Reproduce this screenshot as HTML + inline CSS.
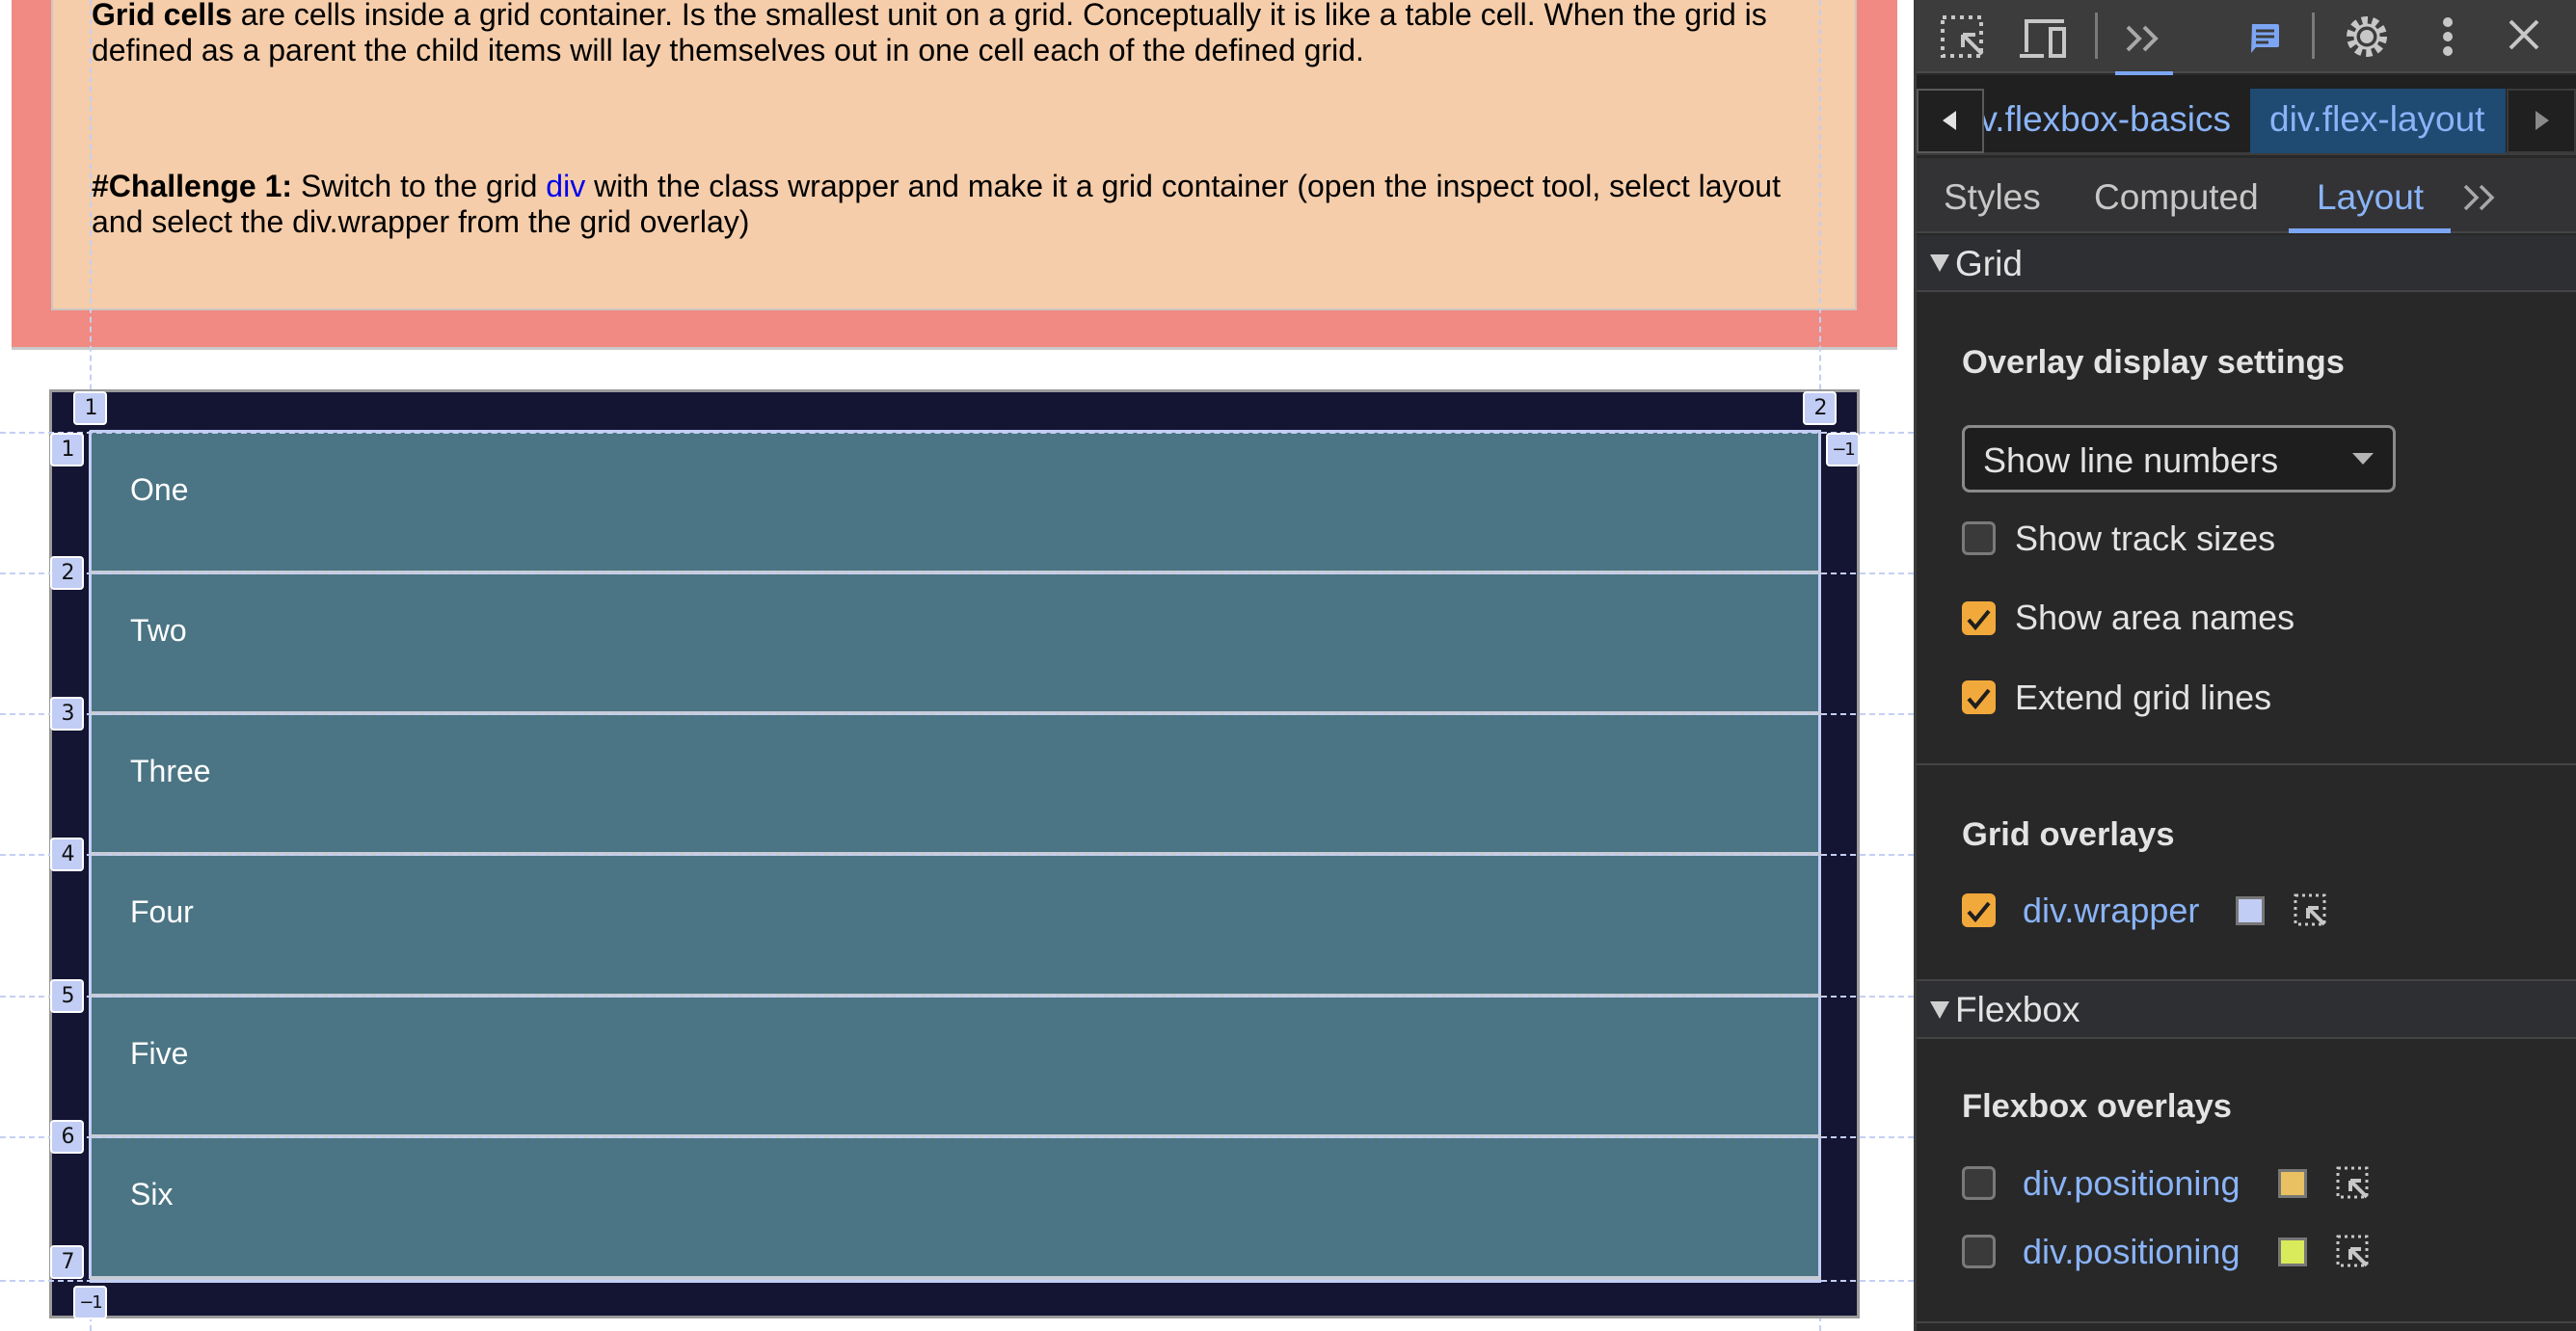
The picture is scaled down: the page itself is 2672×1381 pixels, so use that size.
<!DOCTYPE html>
<html><head><meta charset="utf-8"><style>
*{margin:0;padding:0;box-sizing:border-box}
body{width:2672px;height:1381px;position:relative;overflow:hidden;background:#fff;font-family:"Liberation Sans",Arial,sans-serif}
.a{position:absolute}
.p{font-size:32px;line-height:37px;color:#000;left:95px;width:1860px;white-space:nowrap}
.cell{position:absolute;left:93px;width:1795px;background:#4b7584;color:#fff;font-size:32px}
.cell span{position:absolute;left:42px;top:42px}
.hl{position:absolute;left:93px;width:1796px;height:4px;background:#c8ccd6}
.hd{position:absolute;left:0;width:1985px;height:0;border-top:2px dashed #c4cff3}
.lab{position:absolute;width:35px;height:35px;background:#c2cdf5;border:2px solid #fff;border-radius:4px;color:#111;font-size:22px;text-align:center;line-height:31px;font-family:"DejaVu Sans",sans-serif;letter-spacing:-2px}
.lab.s{font-size:18px}
.dv{color:#e3e3e3;font-size:36px}
.cb{position:absolute;width:35px;height:35px;border-radius:6px}
.cb.off{border:3px solid #7a7a7a;background:#3a3a3a}
.cb.on{background:#f2a93b}
.lnk{color:#8ab4f8;font-size:36px}
.sw{position:absolute;width:30px;height:30px;border:3px solid #777}
.tab{color:#c7c7c7;font-size:37px;top:184px}
.h{font-weight:bold;font-size:34.5px}
</style></head><body>
<div class="a" style="left:12px;top:0;width:1956px;height:363px;background:#f08a82;border-bottom:3px solid #c9c9c9"></div>
<div class="a" style="left:53px;top:0;width:1873px;height:322px;background:#f5cdaa;border:2px solid #cdc6c0;border-top:none"></div>
<div class="a p" style="top:-3px"><b>Grid cells</b> are cells inside a grid container. Is the smallest unit on a grid. Conceptually it is like a table cell. When the grid is<br>defined as a parent the child items will lay themselves out in one cell each of the defined grid.</div>
<div class="a p" style="top:175px"><b>#Challenge 1:</b> Switch to the grid <span style="color:#0000ee">div</span> with the class wrapper and make it a grid container (open the inspect tool, select layout<br>and select the div.wrapper from the grid overlay)</div>
<div class="a" style="left:93px;top:0;height:1381px;border-left:2px dashed #c4cff3"></div>
<div class="a" style="left:1887px;top:0;height:1381px;border-left:2px dashed #c4cff3"></div>
<div class="a" style="left:51px;top:404px;width:1878px;height:964px;background:#141433;border:3px solid #9a9a9a"></div>
<div class="cell" style="top:448px;height:146px"><span>One</span></div>
<div class="cell" style="top:594px;height:146px"><span>Two</span></div>
<div class="cell" style="top:740px;height:146px"><span>Three</span></div>
<div class="cell" style="top:886px;height:147px"><span>Four</span></div>
<div class="cell" style="top:1033px;height:146px"><span>Five</span></div>
<div class="cell" style="top:1179px;height:147px"><span>Six</span></div>
<div class="a" style="left:92px;top:447px;width:3px;height:880px;background:#c2cdf5"></div>
<div class="a" style="left:1886px;top:447px;width:3px;height:880px;background:#c2cdf5"></div>
<div class="hl" style="top:446px;background:#c2cdf5;height:3px"></div>
<div class="hl" style="top:592px"></div><div class="hl" style="top:738px"></div><div class="hl" style="top:884px"></div><div class="hl" style="top:1031px"></div><div class="hl" style="top:1177px"></div><div class="hl" style="top:1324px"></div>
<div class="a" style="left:93px;top:1328px;width:1796px;height:3px;background:#c2cdf5"></div>
<div class="hd" style="top:448px"></div><div class="hd" style="top:594px"></div><div class="hd" style="top:740px"></div><div class="hd" style="top:886px"></div><div class="hd" style="top:1033px"></div><div class="hd" style="top:1179px"></div><div class="hd" style="top:1328px"></div>
<div class="lab" style="left:76px;top:406px">1</div>
<div class="lab" style="left:1870px;top:406px">2</div>
<div class="lab" style="left:52px;top:449px">1</div>
<div class="lab s" style="left:1894px;top:449px">−1</div>
<div class="lab" style="left:52px;top:577px">2</div>
<div class="lab" style="left:52px;top:723px">3</div>
<div class="lab" style="left:52px;top:869px">4</div>
<div class="lab" style="left:52px;top:1016px">5</div>
<div class="lab" style="left:52px;top:1162px">6</div>
<div class="lab" style="left:52px;top:1292px">7</div>
<div class="lab s" style="left:76px;top:1334px">−1</div>

<div class="a" style="left:1985px;top:0;width:687px;height:1381px;background:#282828;border-left:3px solid #3c3c3c"></div>
<div class="a" style="left:1988px;top:0;width:684px;height:76px;background:#3c3c3c;border-bottom:2px solid #4a4a4a"></div>
<svg class="a" style="left:1988px;top:0" width="684" height="80" viewBox="1988 0 684 80">
<g fill="none" stroke="#c7c7c7" stroke-width="4">
<rect x="2015" y="18" width="40" height="40" stroke-dasharray="4 5"/>
<path d="M2036 36 L2056 56 M2036 36 h13 M2036 36 v13"/>
<path d="M2102 54 V22 H2141 M2095 58 H2120"/>
<rect x="2127" y="30" width="14" height="28"/>
<path d="M2207 28 l12 12 l-12 12 M2224 28 l12 12 l-12 12" stroke="#a8a8a8"/>
<path d="M2604 22 l28 28 M2632 22 l-28 28"/>
</g>
<rect x="2173" y="13" width="3" height="48" fill="#7a7a7a"/>
<rect x="2398" y="13" width="3" height="48" fill="#7a7a7a"/>
<path d="M2336 25 h26 a2 2 0 0 1 2 2 v20 a2 2 0 0 1 -2 2 h-22 l-5 6 z" fill="#7ca6f5"/>
<path d="M2340 32 h19 M2340 38 h19 M2340 44 h13" stroke="#3c3c3c" stroke-width="3"/>
<circle cx="2455" cy="38" r="17" fill="none" stroke="#c7c7c7" stroke-width="8" stroke-dasharray="6 4.7"/>
<circle cx="2455" cy="38" r="12" fill="none" stroke="#c7c7c7" stroke-width="3"/>
<circle cx="2455" cy="38" r="7" fill="#c7c7c7"/>
<circle cx="2539" cy="23" r="5" fill="#c7c7c7"/><circle cx="2539" cy="38" r="5" fill="#c7c7c7"/><circle cx="2539" cy="53" r="5" fill="#c7c7c7"/>
<rect x="2194" y="74" width="60" height="5" fill="#7ca6f5"/>
</svg>
<div class="a" style="left:1988px;top:78px;width:684px;height:12px;background:#202020"></div>
<div class="a" style="left:1988px;top:90px;width:684px;height:71px;background:#202020;border-bottom:3px solid #3c3c3c"></div>
<div class="a" style="left:2058px;top:92px;width:256px;height:67px;overflow:hidden"><div style="position:absolute;right:0;top:11px;color:#8ab4f8;font-size:37px;white-space:nowrap">div.flexbox-basics</div></div>
<div class="a" style="left:1988px;top:92px;width:70px;height:67px;border:2px solid #5a5a5a;background:#202020"></div>
<div class="a" style="left:2015px;top:115px;width:0;height:0;border-top:10px solid transparent;border-bottom:10px solid transparent;border-right:14px solid #e3e3e3"></div>
<div class="a" style="left:2334px;top:92px;width:265px;height:67px;background:#1f4a71;color:#8ab4f8;font-size:37px;padding:11px 0 0 20px;white-space:nowrap;overflow:hidden">div.flex-layout</div>
<div class="a" style="left:2600px;top:92px;width:72px;height:67px;border:2px solid #3a3a3a;background:#202020"></div>
<div class="a" style="left:2630px;top:115px;width:0;height:0;border-top:10px solid transparent;border-bottom:10px solid transparent;border-left:14px solid #8a8a8a"></div>
<div class="a" style="left:1988px;top:164px;width:684px;height:78px;background:#333335;border-bottom:2px solid #444"></div>
<div class="a tab" style="left:2016px">Styles</div>
<div class="a tab" style="left:2172px">Computed</div>
<div class="a tab" style="left:2403px;color:#8ab4f8">Layout</div>
<svg class="a" style="left:2555px;top:190px" width="40" height="30"><path d="M2 3 l12 12 l-12 12 M18 3 l12 12 l-12 12" stroke="#a8a8a8" stroke-width="3.5" fill="none"/></svg>
<div class="a" style="left:2374px;top:237px;width:168px;height:5px;background:#7ca6f5"></div>
<div class="a" style="left:1988px;top:244px;width:684px;height:59px;background:#2e2f33;border-bottom:2px solid #444"></div>
<div class="a" style="left:2002px;top:264px;width:0;height:0;border-left:10px solid transparent;border-right:10px solid transparent;border-top:18px solid #cfcfcf"></div>
<div class="a dv" style="left:2028px;top:253px;font-size:37px">Grid</div>
<div class="a dv h" style="left:2035px;top:357px">Overlay display settings</div>
<div class="a" style="left:2035px;top:441px;width:450px;height:70px;border:3px solid #8a8a8a;border-radius:8px;background:#1e1e1e"></div>
<div class="a dv" style="left:2057px;top:457px">Show line numbers</div>
<div class="a" style="left:2440px;top:470px;width:0;height:0;border-left:11px solid transparent;border-right:11px solid transparent;border-top:12px solid #b5b5b5"></div>
<div class="cb off" style="left:2035px;top:541px"></div><div class="a dv" style="left:2090px;top:538px">Show track sizes</div>
<div class="cb on" style="left:2035px;top:624px"></div><div class="a dv" style="left:2090px;top:620px">Show area names</div>
<div class="cb on" style="left:2035px;top:706px"></div><div class="a dv" style="left:2090px;top:703px">Extend grid lines</div>
<div class="a" style="left:1988px;top:792px;width:684px;height:2px;background:#444"></div>
<div class="a dv h" style="left:2035px;top:847px">Grid overlays</div>
<div class="cb on" style="left:2035px;top:927px"></div><div class="a lnk" style="left:2098px;top:924px">div.wrapper</div>
<div class="sw" style="left:2319px;top:930px;background:#c2cdf5"></div>
<svg class="a" style="left:2378px;top:926px" width="40" height="40"><rect x="3" y="3" width="30" height="30" fill="none" stroke="#c7c7c7" stroke-width="3" stroke-dasharray="3 4"/><path d="M16 16 l17 17 M16 16 h11 M16 16 v11" stroke="#c7c7c7" stroke-width="4" fill="none"/></svg>
<div class="a" style="left:1988px;top:1016px;width:684px;height:62px;background:#2e2f33;border-top:2px solid #444;border-bottom:2px solid #444"></div>
<div class="a" style="left:2002px;top:1039px;width:0;height:0;border-left:10px solid transparent;border-right:10px solid transparent;border-top:18px solid #cfcfcf"></div>
<div class="a dv" style="left:2028px;top:1027px;font-size:37px">Flexbox</div>
<div class="a dv h" style="left:2035px;top:1129px">Flexbox overlays</div>
<div class="cb off" style="left:2035px;top:1210px"></div><div class="a lnk" style="left:2098px;top:1207px">div.positioning</div>
<div class="sw" style="left:2363px;top:1213px;background:#e9c162"></div>
<svg class="a" style="left:2422px;top:1209px" width="40" height="40"><rect x="3" y="3" width="30" height="30" fill="none" stroke="#c7c7c7" stroke-width="3" stroke-dasharray="3 4"/><path d="M16 16 l17 17 M16 16 h11 M16 16 v11" stroke="#c7c7c7" stroke-width="4" fill="none"/></svg>
<div class="cb off" style="left:2035px;top:1281px"></div><div class="a lnk" style="left:2098px;top:1278px">div.positioning</div>
<div class="sw" style="left:2363px;top:1284px;background:#d9eb5a"></div>
<svg class="a" style="left:2422px;top:1280px" width="40" height="40"><rect x="3" y="3" width="30" height="30" fill="none" stroke="#c7c7c7" stroke-width="3" stroke-dasharray="3 4"/><path d="M16 16 l17 17 M16 16 h11 M16 16 v11" stroke="#c7c7c7" stroke-width="4" fill="none"/></svg>
<div class="a" style="left:1988px;top:1371px;width:684px;height:2px;background:#444"></div>
<svg class="a" style="left:2035px;top:0" width="36" height="1381">
<g fill="none" stroke="#1e1e1e" stroke-width="4"><path d="M7 643 l7 8 l14 -17"/><path d="M7 725 l7 8 l14 -17"/><path d="M7 946 l7 8 l14 -17"/></g></svg>
</body></html>
